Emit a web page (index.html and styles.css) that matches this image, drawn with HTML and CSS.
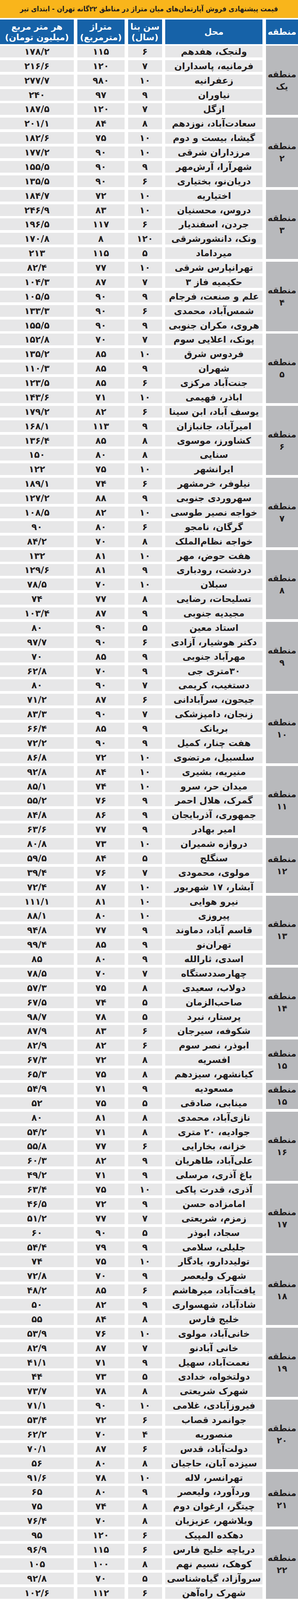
FILE: index.html
```html
<!DOCTYPE html>
<html lang="fa" dir="rtl">
<head>
<meta charset="utf-8">
<title>قیمت پیشنهادی فروش آپارتمان‌های میان متراژ</title>
<link rel="stylesheet" href="styles.css">
</head>
<body>
<div class="page">
  <div class="title">قیمت پیشنهادی فروش آپارتمان&zwnj;های میان متراژ در مناطق ۲۲گانه تهران - ابتدای تیر</div>
  <div class="grid head">
    <div class="h">منطقه</div>
    <div class="h">محل</div>
    <div class="h"><span>سن بنا</span><span>(سال)</span></div>
    <div class="h"><span>متراژ</span><span>(مترمربع)</span></div>
    <div class="h"><span>هر متر مربع</span><span>(میلیون تومان)</span></div>
  </div>
  <div class="body">
    <section class="grid group">
      <div class="region s5"><span>منطقه</span><span>یک</span></div>
      <div class="row"><span class="c">ولنجک، هفدهم</span><span class="c">۶</span><span class="c">۱۱۵</span><span class="c">۱۷۸/۲</span></div>
      <div class="row"><span class="c">فرمانیه، پاسداران</span><span class="c">۷</span><span class="c">۱۲۰</span><span class="c">۲۱۶/۶</span></div>
      <div class="row"><span class="c">زعفرانیه</span><span class="c">۱۰</span><span class="c">۹۸۰</span><span class="c">۲۷۷/۷</span></div>
      <div class="row"><span class="c">نیاوران</span><span class="c">۹</span><span class="c">۹۷</span><span class="c">۲۴۰</span></div>
      <div class="row"><span class="c">ازگل</span><span class="c">۷</span><span class="c">۱۲۰</span><span class="c">۱۸۷/۵</span></div>
    </section>
    <section class="grid group">
      <div class="region s5"><span>منطقه</span><span>۲</span></div>
      <div class="row"><span class="c">سعادت&zwnj;آباد، نوزدهم</span><span class="c">۸</span><span class="c">۸۴</span><span class="c">۲۰۱/۱</span></div>
      <div class="row"><span class="c">گیشا، بیست و دوم</span><span class="c">۱۰</span><span class="c">۷۵</span><span class="c">۱۸۲/۶</span></div>
      <div class="row"><span class="c">مرزداران شرقی</span><span class="c">۱۰</span><span class="c">۹۰</span><span class="c">۱۷۷/۲</span></div>
      <div class="row"><span class="c">شهرآرا، آرش&zwnj;مهر</span><span class="c">۹</span><span class="c">۹۰</span><span class="c">۱۵۵/۵</span></div>
      <div class="row"><span class="c">دریان&zwnj;نو، بختیاری</span><span class="c">۶</span><span class="c">۹۰</span><span class="c">۱۳۵/۵</span></div>
    </section>
    <section class="grid group">
      <div class="region s5"><span>منطقه</span><span>۳</span></div>
      <div class="row"><span class="c">اختیاریه</span><span class="c">۱۰</span><span class="c">۷۲</span><span class="c">۱۸۴/۷</span></div>
      <div class="row"><span class="c">دروس، محسنیان</span><span class="c">۱۰</span><span class="c">۸۳</span><span class="c">۲۴۶/۹</span></div>
      <div class="row"><span class="c">جردن، اسفندیار</span><span class="c">۶</span><span class="c">۱۱۷</span><span class="c">۱۹۶/۵</span></div>
      <div class="row"><span class="c">ونک، دانشورشرقی</span><span class="c">۱۲۰</span><span class="c">۸</span><span class="c">۱۷۰/۸</span></div>
      <div class="row"><span class="c">میرداماد</span><span class="c">۵</span><span class="c">۱۱۵</span><span class="c">۲۱۳</span></div>
    </section>
    <section class="grid group">
      <div class="region s5"><span>منطقه</span><span>۴</span></div>
      <div class="row"><span class="c">تهرانپارس شرقی</span><span class="c">۱۰</span><span class="c">۷۷</span><span class="c">۸۲/۴</span></div>
      <div class="row"><span class="c">حکیمیه فاز ۳</span><span class="c">۷</span><span class="c">۸۷</span><span class="c">۱۰۴/۳</span></div>
      <div class="row"><span class="c">علم و صنعت، فرجام</span><span class="c">۹</span><span class="c">۹۰</span><span class="c">۱۰۵/۵</span></div>
      <div class="row"><span class="c">شمس&zwnj;آباد، محمدی</span><span class="c">۶</span><span class="c">۹۰</span><span class="c">۱۳۳/۳</span></div>
      <div class="row"><span class="c">هروی، مکران جنوبی</span><span class="c">۹</span><span class="c">۹۰</span><span class="c">۱۵۵/۵</span></div>
    </section>
    <section class="grid group">
      <div class="region s5"><span>منطقه</span><span>۵</span></div>
      <div class="row"><span class="c">پونک، اعلایی سوم</span><span class="c">۷</span><span class="c">۷۰</span><span class="c">۱۵۲/۸</span></div>
      <div class="row"><span class="c">فردوس شرق</span><span class="c">۱۰</span><span class="c">۸۵</span><span class="c">۱۳۵/۲</span></div>
      <div class="row"><span class="c">شهران</span><span class="c">۹</span><span class="c">۸۵</span><span class="c">۱۱۰/۳</span></div>
      <div class="row"><span class="c">جنت&zwnj;آباد مرکزی</span><span class="c">۶</span><span class="c">۸۵</span><span class="c">۱۲۳/۵</span></div>
      <div class="row"><span class="c">اباذر، فهیمی</span><span class="c">۱۰</span><span class="c">۷۱</span><span class="c">۱۴۳/۶</span></div>
    </section>
    <section class="grid group">
      <div class="region s5"><span>منطقه</span><span>۶</span></div>
      <div class="row"><span class="c">یوسف آباد، ابن سینا</span><span class="c">۶</span><span class="c">۸۲</span><span class="c">۱۷۹/۲</span></div>
      <div class="row"><span class="c">امیرآباد، جانبازان</span><span class="c">۹</span><span class="c">۱۱۳</span><span class="c">۱۶۸/۱</span></div>
      <div class="row"><span class="c">کشاورز، موسوی</span><span class="c">۸</span><span class="c">۸۵</span><span class="c">۱۳۶/۴</span></div>
      <div class="row"><span class="c">سنایی</span><span class="c">۸</span><span class="c">۸۰</span><span class="c">۱۵۰</span></div>
      <div class="row"><span class="c">ایرانشهر</span><span class="c">۱۰</span><span class="c">۷۵</span><span class="c">۱۲۲</span></div>
    </section>
    <section class="grid group">
      <div class="region s5"><span>منطقه</span><span>۷</span></div>
      <div class="row"><span class="c">نیلوفر، خرمشهر</span><span class="c">۶</span><span class="c">۷۴</span><span class="c">۱۸۹/۱</span></div>
      <div class="row"><span class="c">سهروردی جنوبی</span><span class="c">۹</span><span class="c">۸۸</span><span class="c">۱۲۷/۲</span></div>
      <div class="row"><span class="c">خواجه نصیر طوسی</span><span class="c">۱۰</span><span class="c">۸۲</span><span class="c">۱۰۸/۵</span></div>
      <div class="row"><span class="c">گرگان، نامجو</span><span class="c">۶</span><span class="c">۸۰</span><span class="c">۹۰</span></div>
      <div class="row"><span class="c">خواجه نظام&zwnj;الملک</span><span class="c">۸</span><span class="c">۷۰</span><span class="c">۸۴/۲</span></div>
    </section>
    <section class="grid group">
      <div class="region s5"><span>منطقه</span><span>۸</span></div>
      <div class="row"><span class="c">هفت حوض، مهر</span><span class="c">۱۰</span><span class="c">۸۱</span><span class="c">۱۳۲</span></div>
      <div class="row"><span class="c">دردشت، رودباری</span><span class="c">۹</span><span class="c">۸۱</span><span class="c">۱۲۹/۶</span></div>
      <div class="row"><span class="c">سبلان</span><span class="c">۱۰</span><span class="c">۷۰</span><span class="c">۷۸/۵</span></div>
      <div class="row"><span class="c">تسلیحات، رضایی</span><span class="c">۸</span><span class="c">۷۷</span><span class="c">۷۴</span></div>
      <div class="row"><span class="c">مجیدیه جنوبی</span><span class="c">۹</span><span class="c">۸۷</span><span class="c">۱۰۳/۴</span></div>
    </section>
    <section class="grid group">
      <div class="region s5"><span>منطقه</span><span>۹</span></div>
      <div class="row"><span class="c">استاد معین</span><span class="c">۵</span><span class="c">۹۰</span><span class="c">۸۰</span></div>
      <div class="row"><span class="c">دکتر هوشیار، آزادی</span><span class="c">۶</span><span class="c">۹۰</span><span class="c">۹۷/۷</span></div>
      <div class="row"><span class="c">مهرآباد جنوبی</span><span class="c">۹</span><span class="c">۸۵</span><span class="c">۷۰</span></div>
      <div class="row"><span class="c">۳۰متری جی</span><span class="c">۹</span><span class="c">۷۰</span><span class="c">۶۲/۸</span></div>
      <div class="row"><span class="c">دستغیب، کریمی</span><span class="c">۷</span><span class="c">۹۰</span><span class="c">۸۰</span></div>
    </section>
    <section class="grid group">
      <div class="region s5"><span>منطقه</span><span>۱۰</span></div>
      <div class="row"><span class="c">جیحون، سرآبادانی</span><span class="c">۶</span><span class="c">۸۷</span><span class="c">۷۱/۲</span></div>
      <div class="row"><span class="c">زنجان، دامپزشکی</span><span class="c">۷</span><span class="c">۹۰</span><span class="c">۸۳/۳</span></div>
      <div class="row"><span class="c">بریانک</span><span class="c">۹</span><span class="c">۸۵</span><span class="c">۶۶/۴</span></div>
      <div class="row"><span class="c">هفت چنار، کمیل</span><span class="c">۹</span><span class="c">۹۰</span><span class="c">۷۲/۲</span></div>
      <div class="row"><span class="c">سلسبیل، مرتضوی</span><span class="c">۱۰</span><span class="c">۷۲</span><span class="c">۸۶/۸</span></div>
    </section>
    <section class="grid group">
      <div class="region s5"><span>منطقه</span><span>۱۱</span></div>
      <div class="row"><span class="c">منیریه، بشیری</span><span class="c">۱۰</span><span class="c">۸۴</span><span class="c">۹۲/۸</span></div>
      <div class="row"><span class="c">میدان حر، سرو</span><span class="c">۱۰</span><span class="c">۷۴</span><span class="c">۸۵/۱</span></div>
      <div class="row"><span class="c">گمرک، هلال احمر</span><span class="c">۹</span><span class="c">۷۶</span><span class="c">۵۵/۲</span></div>
      <div class="row"><span class="c">جمهوری، آذربایجان</span><span class="c">۹</span><span class="c">۸۶</span><span class="c">۸۴/۸</span></div>
      <div class="row"><span class="c">امیر بهادر</span><span class="c">۹</span><span class="c">۷۷</span><span class="c">۶۳/۶</span></div>
    </section>
    <section class="grid group">
      <div class="region s4"><span>منطقه</span><span>۱۲</span></div>
      <div class="row"><span class="c">دروازه شمیران</span><span class="c">۱۰</span><span class="c">۷۳</span><span class="c">۸۰/۸</span></div>
      <div class="row"><span class="c">سنگلج</span><span class="c">۵</span><span class="c">۸۴</span><span class="c">۵۹/۵</span></div>
      <div class="row"><span class="c">مولوی، محمودی</span><span class="c">۷</span><span class="c">۷۶</span><span class="c">۳۹/۴</span></div>
      <div class="row"><span class="c">آبشار، ۱۷ شهریور</span><span class="c">۱۰</span><span class="c">۸۷</span><span class="c">۷۲/۴</span></div>
    </section>
    <section class="grid group">
      <div class="region s5"><span>منطقه</span><span>۱۳</span></div>
      <div class="row"><span class="c">نیرو هوایی</span><span class="c">۱۰</span><span class="c">۸۱</span><span class="c">۱۱۱/۱</span></div>
      <div class="row"><span class="c">پیروزی</span><span class="c">۱۰</span><span class="c">۸۰</span><span class="c">۸۸/۱</span></div>
      <div class="row"><span class="c">قاسم آباد، دماوند</span><span class="c">۹</span><span class="c">۷۷</span><span class="c">۹۴/۸</span></div>
      <div class="row"><span class="c">تهران&zwnj;نو</span><span class="c">۹</span><span class="c">۸۵</span><span class="c">۹۹/۴</span></div>
      <div class="row"><span class="c">اسدی، ثارالله</span><span class="c">۹</span><span class="c">۸۰</span><span class="c">۸۵</span></div>
    </section>
    <section class="grid group">
      <div class="region s5"><span>منطقه</span><span>۱۴</span></div>
      <div class="row"><span class="c">چهارصددستگاه</span><span class="c">۷</span><span class="c">۷۰</span><span class="c">۷۸/۵</span></div>
      <div class="row"><span class="c">دولاب، سعیدی</span><span class="c">۸</span><span class="c">۷۵</span><span class="c">۵۷/۳</span></div>
      <div class="row"><span class="c">صاحب&zwnj;الزمان</span><span class="c">۵</span><span class="c">۷۴</span><span class="c">۶۷/۵</span></div>
      <div class="row"><span class="c">پرستار، نبرد</span><span class="c">۵</span><span class="c">۷۸</span><span class="c">۹۸/۷</span></div>
      <div class="row"><span class="c">شکوفه، سیرجان</span><span class="c">۶</span><span class="c">۸۳</span><span class="c">۸۷/۹</span></div>
    </section>
    <section class="grid group">
      <div class="region s3"><span>منطقه</span><span>۱۵</span></div>
      <div class="row"><span class="c">ابوذر، نصر سوم</span><span class="c">۶</span><span class="c">۸۲</span><span class="c">۸۲/۹</span></div>
      <div class="row"><span class="c">افسریه</span><span class="c">۸</span><span class="c">۷۲</span><span class="c">۶۷/۳</span></div>
      <div class="row"><span class="c">کیانشهر، سیزدهم</span><span class="c">۸</span><span class="c">۷۵</span><span class="c">۶۵/۳</span></div>
    </section>
    <section class="grid group">
      <div class="region s2"><span>منطقه</span><span>۱۵</span></div>
      <div class="row"><span class="c">مسعودیه</span><span class="c">۹</span><span class="c">۷۱</span><span class="c">۵۴/۹</span></div>
      <div class="row"><span class="c">مینابی، صادقی</span><span class="c">۵</span><span class="c">۷۵</span><span class="c">۵۲</span></div>
    </section>
    <section class="grid group">
      <div class="region s5"><span>منطقه</span><span>۱۶</span></div>
      <div class="row"><span class="c">نازی&zwnj;آباد، محمدی</span><span class="c">۸</span><span class="c">۸۱</span><span class="c">۸۰</span></div>
      <div class="row"><span class="c">جوادیه، ۲۰ متری</span><span class="c">۸</span><span class="c">۷۱</span><span class="c">۵۴/۲</span></div>
      <div class="row"><span class="c">خزانه، بخارایی</span><span class="c">۶</span><span class="c">۷۷</span><span class="c">۵۵/۸</span></div>
      <div class="row"><span class="c">علی&zwnj;آباد، طاهریان</span><span class="c">۹</span><span class="c">۸۲</span><span class="c">۶۰/۳</span></div>
      <div class="row"><span class="c">باغ آذری، مرسلی</span><span class="c">۹</span><span class="c">۷۱</span><span class="c">۴۹/۲</span></div>
    </section>
    <section class="grid group">
      <div class="region s5"><span>منطقه</span><span>۱۷</span></div>
      <div class="row"><span class="c">آذری، قدرت پاکی</span><span class="c">۱۰</span><span class="c">۷۵</span><span class="c">۶۳/۴</span></div>
      <div class="row"><span class="c">امامزاده حسن</span><span class="c">۹</span><span class="c">۷۲</span><span class="c">۴۶/۵</span></div>
      <div class="row"><span class="c">زمزم، شریعتی</span><span class="c">۷</span><span class="c">۷۷</span><span class="c">۵۱/۲</span></div>
      <div class="row"><span class="c">سجاد، ابوذر</span><span class="c">۵</span><span class="c">۹۰</span><span class="c">۶۰</span></div>
      <div class="row"><span class="c">جلیلی، سلامی</span><span class="c">۹</span><span class="c">۷۹</span><span class="c">۵۴/۴</span></div>
    </section>
    <section class="grid group">
      <div class="region s5"><span>منطقه</span><span>۱۸</span></div>
      <div class="row"><span class="c">تولیددارو، یادگار</span><span class="c">۱۰</span><span class="c">۷۵</span><span class="c">۷۴</span></div>
      <div class="row"><span class="c">شهرک ولیعصر</span><span class="c">۹</span><span class="c">۷۰</span><span class="c">۷۲/۸</span></div>
      <div class="row"><span class="c">یافت&zwnj;آباد، میرهاشم</span><span class="c">۶</span><span class="c">۸۵</span><span class="c">۴۸/۲</span></div>
      <div class="row"><span class="c">شادآباد، شهسواری</span><span class="c">۹</span><span class="c">۸۲</span><span class="c">۵۰</span></div>
      <div class="row"><span class="c">خلیج فارس</span><span class="c">۸</span><span class="c">۸۴</span><span class="c">۵۵</span></div>
    </section>
    <section class="grid group">
      <div class="region s5"><span>منطقه</span><span>۱۹</span></div>
      <div class="row"><span class="c">خانی&zwnj;آباد، مولوی</span><span class="c">۱۰</span><span class="c">۷۶</span><span class="c">۵۳/۹</span></div>
      <div class="row"><span class="c">خانی آبادنو</span><span class="c">۷</span><span class="c">۸۷</span><span class="c">۸۲/۹</span></div>
      <div class="row"><span class="c">نعمت&zwnj;آباد، سهیل</span><span class="c">۹</span><span class="c">۷۱</span><span class="c">۴۱/۱</span></div>
      <div class="row"><span class="c">دولتخواه، خدادی</span><span class="c">۵</span><span class="c">۷۳</span><span class="c">۴۴</span></div>
      <div class="row"><span class="c">شهرک شریعتی</span><span class="c">۸</span><span class="c">۷۸</span><span class="c">۷۳/۷</span></div>
    </section>
    <section class="grid group">
      <div class="region s5"><span>منطقه</span><span>۲۰</span></div>
      <div class="row"><span class="c">فیروزآبادی، غلامی</span><span class="c">۱۰</span><span class="c">۹۰</span><span class="c">۷۱/۱</span></div>
      <div class="row"><span class="c">جوانمرد قصاب</span><span class="c">۶</span><span class="c">۷۲</span><span class="c">۵۳/۴</span></div>
      <div class="row"><span class="c">منصوریه</span><span class="c">۴</span><span class="c">۷۰</span><span class="c">۶۲/۲</span></div>
      <div class="row"><span class="c">دولت&zwnj;آباد، قدس</span><span class="c">۶</span><span class="c">۸۷</span><span class="c">۷۰/۱</span></div>
      <div class="row"><span class="c">سیزده آبان، حاجیان</span><span class="c">۸</span><span class="c">۸۰</span><span class="c">۵۶</span></div>
    </section>
    <section class="grid group">
      <div class="region s4"><span>منطقه</span><span>۲۱</span></div>
      <div class="row"><span class="c">تهرانسر، لاله</span><span class="c">۱۰</span><span class="c">۷۸</span><span class="c">۹۱/۶</span></div>
      <div class="row"><span class="c">وردآورد، ولیعصر</span><span class="c">۹</span><span class="c">۸۰</span><span class="c">۶۵</span></div>
      <div class="row"><span class="c">چیتگر، ارغوان دوم</span><span class="c">۸</span><span class="c">۷۴</span><span class="c">۷۵</span></div>
      <div class="row"><span class="c">ویلاشهر، عزیزیان</span><span class="c">۸</span><span class="c">۷۰</span><span class="c">۷۶/۴</span></div>
    </section>
    <section class="grid group">
      <div class="region s5"><span>منطقه</span><span>۲۲</span></div>
      <div class="row"><span class="c">دهکده المپیک</span><span class="c">۶</span><span class="c">۱۲۰</span><span class="c">۹۵</span></div>
      <div class="row"><span class="c">دریاچه خلیج فارس</span><span class="c">۶</span><span class="c">۱۱۵</span><span class="c">۹۶/۹</span></div>
      <div class="row"><span class="c">کوهک، نسیم نهم</span><span class="c">۸</span><span class="c">۱۰۰</span><span class="c">۱۰۵</span></div>
      <div class="row"><span class="c">سروآزاد، گیاه&zwnj;شناسی</span><span class="c">۵</span><span class="c">۷۰</span><span class="c">۹۲/۸</span></div>
      <div class="row"><span class="c">شهرک راه&zwnj;آهن</span><span class="c">۶</span><span class="c">۱۱۲</span><span class="c">۱۰۲/۶</span></div>
    </section>
  </div>
</div>
</body>
</html>
```

FILE: styles.css
```css
* {
  box-sizing: border-box;
  margin: 0;
  padding: 0;
}

html,
body {
  margin: 0;
  background: #ffffff;
  overflow-x: hidden;
}

body {
  font-family: "DejaVu Sans", sans-serif;
  color: #1f1c1d;
}

.page {
  width: 763px;
  direction: rtl;
  overflow: hidden;
}

.title {
  height: 45.5px;
  background: #f9b51b;
  display: flex;
  align-items: center;
  justify-content: center;
  font-family: "DejaVu Sans Condensed", "DejaVu Sans", sans-serif;
  font-stretch: condensed;
  font-weight: bold;
  font-size: 18px;
  white-space: nowrap;
  color: #1f1c1d;
}

.grid {
  display: grid;
  grid-template-columns: 82px 249px 87px 121px 189px;
  column-gap: 8.75px;
}

.head {
  margin-top: 4.7px;
  height: 63.1px;
}

.h {
  background: #1662a8;
  color: #ffffff;
  font-weight: bold;
  font-size: 22px;
  line-height: 27px;
  display: flex;
  flex-direction: column;
  align-items: center;
  justify-content: center;
  text-align: center;
  white-space: nowrap;
}

.body {
  margin-top: 3.6px;
  display: flex;
  flex-direction: column;
  row-gap: 6.88px;
}

.group {
  grid-auto-rows: 30px;
  row-gap: 6.88px;
}

.row {
  display: contents;
}

.region {
  grid-column: 1;
  background: #b8b9bc;
  display: flex;
  flex-direction: column;
  align-items: center;
  justify-content: center;
  font-weight: bold;
  font-size: 22px;
  line-height: 31px;
  white-space: nowrap;
}

.s2 { grid-row: 1 / span 2; }
.s3 { grid-row: 1 / span 3; }
.s4 { grid-row: 1 / span 4; }
.s5 { grid-row: 1 / span 5; }

.c {
  background: #e7e7e8;
  display: flex;
  align-items: center;
  justify-content: center;
  font-weight: bold;
  font-size: 23px;
  line-height: 30px;
  white-space: nowrap;
}
```
